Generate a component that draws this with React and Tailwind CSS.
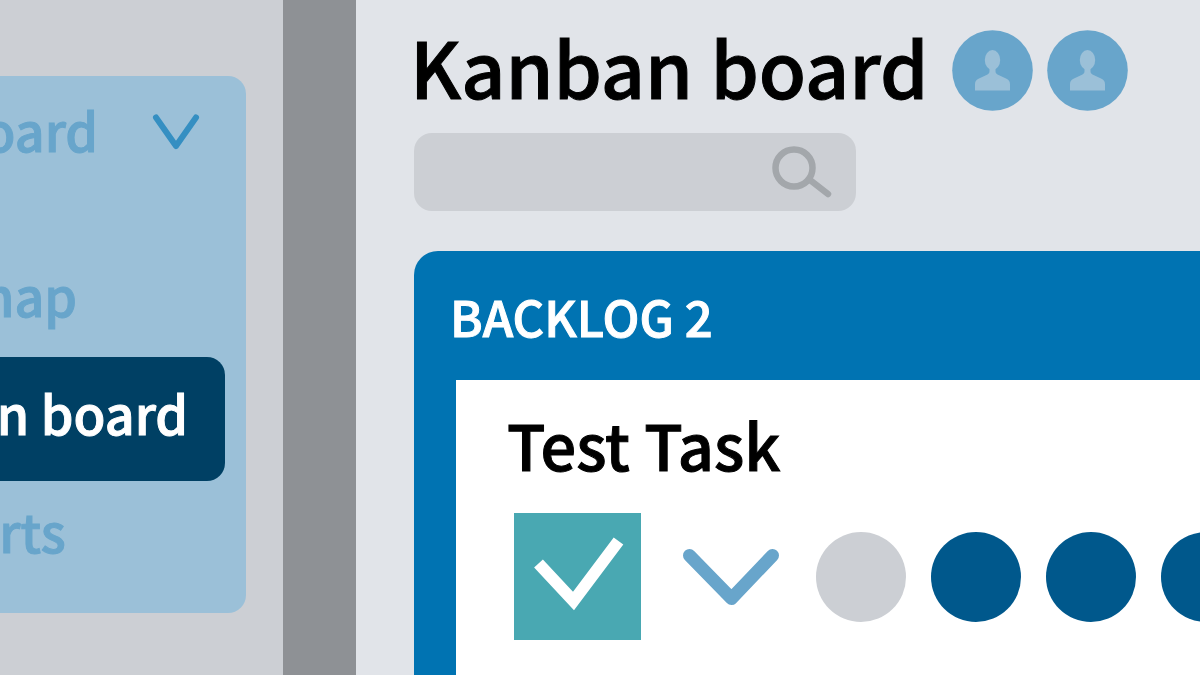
import { useState } from 'react';

const navItems = [
  { id: 1, label: 'Roadmap' },
  { id: 2, label: 'Kanban board' },
  { id: 3, label: 'Supports' },
];

const people = ['Member 1', 'Member 2'];

const dots = [
  { id: 1, color: 'bg-[#cccfd4]' },
  { id: 2, color: 'bg-[#00588c]' },
  { id: 3, color: 'bg-[#00588c]' },
  { id: 4, color: 'bg-[#00588c]' },
];

function Avatar({ name }) {
  return (
    <svg viewBox="0 0 81 81" className="w-[81px] h-[81px] shrink-0" role="img" aria-label={name}>
      <circle cx="40.5" cy="40.5" r="40.3" fill="#68a5cb" />
      <g fill="#9bc0d8">
        <ellipse cx="40.5" cy="30" rx="7.7" ry="10" />
        <path d="M23 60.5v-6c0-3 1-4.500 3.500-5.800l9-4.200c1.500-.8 2-1.800 2-3.500V37h6v4c0 1.700.5 2.700 2 3.500l9 4.200c2.500 1.300 3.500 2.800 3.500 5.800v6z" />
      </g>
    </svg>
  );
}

function Sidebar({ active, setActive }) {
  return (
    <aside className="w-[283px] shrink-0 bg-[#cccfd4] overflow-hidden pt-[76px]">
      {/* The panel runs past the left edge of the window */}
      <div className="-ml-[290px] w-[536px] rounded-[18px] bg-[#9bc0d8] pb-5 text-[52px] leading-none text-[#68a5cb]">
        <button className="flex w-full h-[120px] items-center justify-between pl-[38px] pr-[46px] pb-3 whitespace-nowrap">
          Kanban board
          <svg viewBox="0 0 48 40" className="w-[48px] h-[40px]" fill="none" aria-hidden="true">
            <path d="M4 7.500L24 36L44 7.500" stroke="#358fc2" strokeWidth="6" strokeLinecap="round" strokeLinejoin="round" />
          </svg>
        </button>
        <nav className="mt-[49px] pl-[84px] pr-[21px]">
          {navItems.map((item) => (
            <a
              key={item.id}
              href="#"
              onClick={() => setActive(item.id)}
              className={
                item.id === active
                  ? 'flex h-[124px] items-center pl-[44px] pb-3 rounded-[18px] bg-[#004064] text-white whitespace-nowrap'
                  : 'flex h-[112px] items-center pl-[44px] pb-3 whitespace-nowrap'
              }
            >
              {item.label}
            </a>
          ))}
        </nav>
      </div>
    </aside>
  );
}

function TaskCard() {
  const [done, setDone] = useState(true);

  return (
    <article className="flex-1 bg-white pl-[51px] pt-[24px]">
      <h3 className="text-[63px] leading-[80px] font-medium text-black">
        <label htmlFor="task-done">Test Task</label>
      </h3>
      <div className="flex items-center pl-[7px] pt-[29px]">
        <div className="relative w-[127px] h-[127px] shrink-0">
          <input
            id="task-done"
            type="checkbox"
            checked={done}
            onChange={() => setDone(!done)}
            className="block w-full h-full appearance-none bg-[#49a8b2]"
          />
          {done && (
            <svg viewBox="0 0 127 127" className="absolute inset-0 pointer-events-none" fill="none" aria-hidden="true">
              <path d="M24.500 50.500L59.500 88L104.500 28" stroke="white" strokeWidth="12" />
            </svg>
          )}
        </div>
        <button className="ml-[42px] shrink-0" aria-label="Expand task">
          <svg viewBox="0 0 96 56" className="w-[96px] h-[56px]" fill="none" aria-hidden="true">
            <path d="M6.500 6.500L48.500 49.500L89.500 6.500" stroke="#68a5cb" strokeWidth="13" strokeLinecap="round" strokeLinejoin="round" />
          </svg>
        </button>
        <div className="ml-[37px] flex gap-[25px]">
          {dots.map((dot) => (
            <span key={dot.id} className={`w-[90px] h-[90px] shrink-0 rounded-full ${dot.color}`} />
          ))}
        </div>
      </div>
    </article>
  );
}

export default function App() {
  const [active, setActive] = useState(2);

  return (
    <div className="flex h-screen overflow-hidden bg-[#e1e4e9] font-['Noto_Sans_CJK_SC',sans-serif] font-medium [-webkit-text-stroke:1px]">
      <Sidebar active={active} setActive={setActive} />
      <div className="w-[73px] shrink-0 bg-[#8e9195]" />

      <main className="flex flex-1 min-w-0 flex-col pl-[54px] pt-[30px]">
        <header className="flex items-start">
          <h1 className="text-[77px] leading-[72px] font-medium text-black whitespace-nowrap">Kanban board</h1>
          <div className="ml-6 flex gap-[14px]">
            {people.map((name) => (
              <Avatar key={name} name={name} />
            ))}
          </div>
        </header>

        <div className="flex flex-1 flex-col pl-[4px] pt-[22px]">
          <div className="flex w-[442px] h-[78px] items-center rounded-[18px] bg-[#cccfd4] pl-6 pr-6">
            <input type="text" aria-label="Search" className="flex-1 min-w-0 bg-transparent text-3xl outline-none" />
            <svg viewBox="0 0 60 52" className="w-[60px] h-[52px] shrink-0" fill="none" aria-hidden="true">
              <circle cx="22" cy="22" r="18.500" stroke="#a3a7ab" strokeWidth="6.500" />
              <path d="M38 34L56 48" stroke="#a3a7ab" strokeWidth="6.500" strokeLinecap="round" />
            </svg>
          </div>

          <section className="mt-10 flex flex-1 flex-col rounded-tl-[24px] bg-[#0073b2]">
            <h2 className="pl-[36px] pt-[25px] pb-[24px] text-[49px] leading-[80px] font-medium text-white">BACKLOG 2</h2>
            <div className="flex flex-1 pl-[42px]">
              <TaskCard />
            </div>
          </section>
        </div>
      </main>
    </div>
  );
}
